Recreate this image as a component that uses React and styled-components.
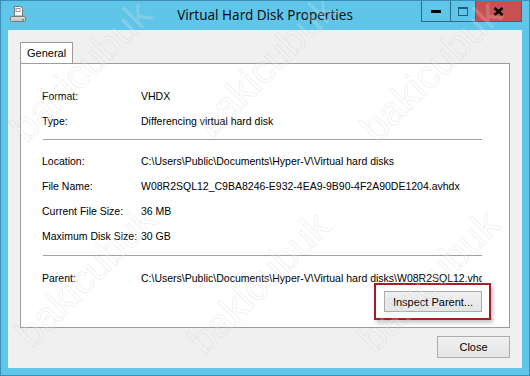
import React from 'react';
import styled, { createGlobalStyle } from 'styled-components';

const GlobalStyle = createGlobalStyle`
  html, body {
    margin: 0;
    padding: 0;
    background: #ffffff;
  }
  body {
    font-family: "Liberation Sans", Arial, sans-serif;
  }
`

const Window = styled.div`
  position: relative;
  width: 530px;
  height: 376px;
  box-sizing: border-box;
  border: 1px solid #3a8fb8;
  background: #5fc6ea;
  display: flex;
  flex-direction: column;
  overflow: hidden;
`

const TitleBar = styled.div`
  height: 29px;
  flex: none;
  display: grid;
  grid-template-columns: 1fr auto 1fr;
  align-items: start;
`

const AppIcon = styled.div`
  margin: 4px 0 0 9px;
  width: 17px;
  height: 17px;
  svg { display: block; }
`

const Title = styled.div`
  font-family: "Noto Sans", "Open Sans", sans-serif;
  font-size: 13.5px;
  line-height: 29px;
  color: #111;
  white-space: nowrap;
`

const CaptionButtons = styled.div`
  justify-self: end;
  margin-right: 7px;
  display: flex;
  height: 20px;
  border: 1px solid #2b6c8c;
  border-top: none;
`

const CaptionButton = styled.div`
  width: ${p => p.$w}px;
  height: 20px;
  display: flex;
  align-items: center;
  justify-content: center;
  background: ${p => (p.$close ? '#c75050' : 'transparent')};
  border-right: ${p => (p.$divider ? '1px solid #2b6c8c' : 'none')};
  svg { display: block; }
`

const Client = styled.div`
  flex: 1;
  margin: 0 7px 7px 7px;
  padding: 12px 12px 10px 12px;
  background: #f0f0f0;
  display: flex;
  flex-direction: column;
`

const TabStrip = styled.div`
  display: flex;
  height: 21px;
  flex: none;
`

const Tab = styled.div`
  position: relative;
  z-index: 1;
  height: 21px;
  box-sizing: border-box;
  padding: 0 6px;
  border: 1px solid #9c9c9c;
  border-bottom: none;
  background: #ffffff;
  font-size: 11px;
  line-height: 20px;
  color: #000;
  margin-bottom: -1px;
`

const Panel = styled.div`
  height: 265px;
  box-sizing: border-box;
  flex: none;
  border: 1px solid #9c9c9c;
  background: #ffffff;
  padding: 19px 18px 0 21px;
  display: flex;
  flex-direction: column;
`

const Row = styled.div`
  display: grid;
  grid-template-columns: 99px 341px;
  height: 25px;
  align-items: center;
  font-size: 10.5px;
  color: #000;
`

const Label = styled.span`
  white-space: nowrap;
`

const Value = styled.span`
  white-space: nowrap;
  overflow: hidden;
`

const Divider = styled.div`
  height: 1px;
  width: 439px;
  margin: ${p => p.$top}px 0 ${p => p.$bottom}px 1px;
  background: #a0a0a0;
`

const ButtonRow = styled.div`
  display: flex;
  justify-content: flex-end;
`

const Highlight = styled.div`
  margin-top: -7px;
  border: 2px solid #a61e24;
  padding: 6px 7px 6px 8px;
  box-shadow: 2px 3px 4px rgba(0, 0, 0, 0.22);
`

const Button = styled.button`
  display: block;
  box-sizing: border-box;
  width: ${p => p.$w}px;
  height: ${p => p.$h}px;
  padding: 0;
  margin: 0;
  border: 1px solid #acacac;
  background: linear-gradient(#f0f0f0, #e5e5e5);
  font-family: "Liberation Sans", Arial, sans-serif;
  font-size: 11px;
  color: #000;
`

const Footer = styled.div`
  margin-top: 8px;
  display: flex;
  justify-content: flex-end;
`

const Watermark = styled.span`
  position: absolute;
  left: ${p => p.$x}px;
  top: ${p => p.$y}px;
  transform: translate(-50%, -50%) rotate(-45deg);
  font-family: "Liberation Sans", Arial, sans-serif;
  font-size: 40px;
  color: rgba(255, 255, 255, 0.2);
  -webkit-text-stroke: 1px rgba(160, 160, 160, 0.16);
  white-space: nowrap;
  pointer-events: none;
  z-index: 5;
`

const DiskIcon = () => (
  <svg width="17" height="17" viewBox="0 0 17 17">
    <path d="M4.5 1.5h6l2 2v7.5h-8z" fill="#fff" stroke="#7a7a7a" />
    <rect x="6" y="3.5" width="4" height="3" fill="none" stroke="#9a9a9a" />
    <rect x="0.5" y="11.5" width="15" height="5" rx="1" fill="#c8c8c8" stroke="#7a7a7a" />
    <rect x="1.5" y="12.5" width="13" height="1" fill="#e8e8e8" />
    <rect x="12" y="14" width="2" height="1.5" fill="#27a844" />
  </svg>
)

const MinGlyph = () => (
  <svg width="10" height="3" viewBox="0 0 10 3">
    <rect width="10" height="3" fill="#000" />
  </svg>
)

const MaxGlyph = () => (
  <svg width="10" height="9" viewBox="0 0 10 9">
    <rect x="0.5" y="1" width="9" height="7.5" fill="none" stroke="#1c5f80" />
    <rect x="0" y="0" width="10" height="2" fill="#1c5f80" />
  </svg>
)

const CloseGlyph = () => (
  <svg width="11" height="9" viewBox="0 0 11 9">
    <path d="M1.5 1l8 7M9.5 1l-8 7" stroke="#000" strokeWidth="2.4" />
  </svg>
)

const details = [
  ['Location:', 'C:\\Users\\Public\\Documents\\Hyper-V\\Virtual hard disks'],
  ['File Name:', 'W08R2SQL12_C9BA8246-E932-4EA9-9B90-4F2A90DE1204.avhdx'],
  ['Current File Size:', '36 MB'],
  ['Maximum Disk Size:', '30 GB'],
]

const marks = [
  [80, 70], [265, 65], [430, 70],
  [85, 275], [258, 282], [428, 280],
]

export default function App() {
  return (
    <>
      <GlobalStyle />
      <Window>
        <TitleBar>
          <AppIcon><DiskIcon /></AppIcon>
          <Title>Virtual Hard Disk Properties</Title>
          <CaptionButtons>
            <CaptionButton $w={28} $divider><MinGlyph /></CaptionButton>
            <CaptionButton $w={24} $divider><MaxGlyph /></CaptionButton>
            <CaptionButton $w={45} $close><CloseGlyph /></CaptionButton>
          </CaptionButtons>
        </TitleBar>
        <Client>
          <TabStrip>
            <Tab>General</Tab>
          </TabStrip>
          <Panel>
            <Row><Label>Format:</Label><Value>VHDX</Value></Row>
            <Row><Label>Type:</Label><Value>Differencing virtual hard disk</Value></Row>
            <Divider $top={6} $bottom={8} />
            {details.map(([label, value]) => (
              <Row key={label}><Label>{label}</Label><Value>{value}</Value></Row>
            ))}
            <Divider $top={7} $bottom={9} />
            <Row>
              <Label>Parent:</Label>
              <Value>C:\Users\Public\Documents\Hyper-V\Virtual hard disks\W08R2SQL12.vhdx</Value>
            </Row>
            <ButtonRow>
              <Highlight>
                <Button $w={98} $h={21}>Inspect Parent...</Button>
              </Highlight>
            </ButtonRow>
          </Panel>
          <Footer>
            <Button $w={73} $h={22}>Close</Button>
          </Footer>
        </Client>
        {marks.map(([x, y]) => (
          <Watermark key={`${x}-${y}`} $x={x} $y={y}>bakicubuk</Watermark>
        ))}
      </Window>
    </>
  );
}
